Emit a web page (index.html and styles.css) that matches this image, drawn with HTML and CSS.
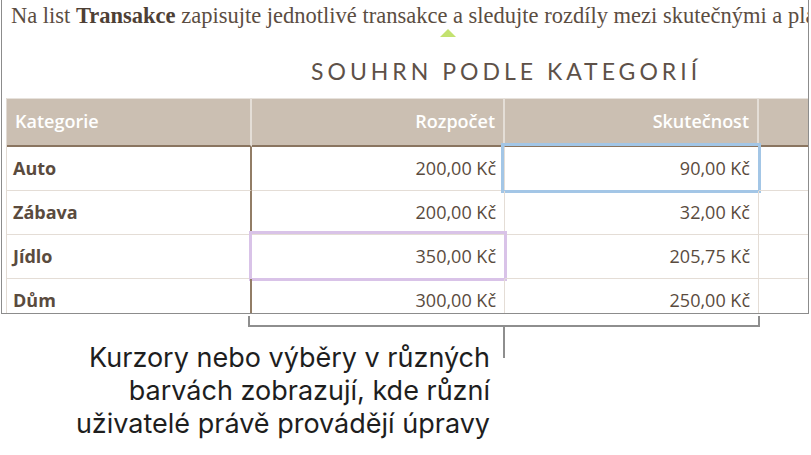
FILE: index.html
```html
<!DOCTYPE html>
<html lang="cs">
<head>
<meta charset="utf-8">
<link rel="stylesheet" href="styles.css">
</head>
<body>
<div class="frame">
  <p class="intro">Na list <b>Transakce</b> zapisujte jednotlivé transakce a sledujte rozdíly mezi skutečnými a plánovanými výdaji</p>
  <div class="cursor"></div>
  <h1 class="title">SOUHRN PODLE KATEGORIÍ</h1>
  <div class="table">
    <div class="hcell">Kategorie</div>
    <div class="hcell num">Rozpočet</div>
    <div class="hcell num">Skutečnost</div>
    <div class="hcell last"></div>

    <div class="cell cat">Auto</div>
    <div class="cell num">200,00 Kč</div>
    <div class="cell num">90,00 Kč<span class="sel blue"></span></div>
    <div class="cell last"></div>

    <div class="cell cat">Zábava</div>
    <div class="cell num">200,00 Kč</div>
    <div class="cell num">32,00 Kč</div>
    <div class="cell last"></div>

    <div class="cell cat">Jídlo</div>
    <div class="cell num">350,00 Kč<span class="sel purple"></span></div>
    <div class="cell num">205,75 Kč</div>
    <div class="cell last"></div>

    <div class="cell cat">Dům</div>
    <div class="cell num">300,00 Kč</div>
    <div class="cell num">250,00 Kč</div>
    <div class="cell last"></div>
  </div>
</div>
<div class="bracket"></div>
<div class="callout">
  <p class="caption">Kurzory nebo výběry v různých<br>barvách zobrazují, kde různí<br>uživatelé právě provádějí úpravy</p>
  <div class="stem"></div>
</div>
</body>
</html>
```

FILE: styles.css
```css
html, body {
  margin: 0;
  padding: 0;
  background: #ffffff;
}
body {
  width: 811px;
  height: 455px;
  overflow: hidden;
}
.frame {
  margin-left: 1px;
  width: 808px;
  height: 314px;
  box-sizing: border-box;
  border-left: 1px solid #8c8c8c;
  border-right: 1px solid #8c8c8c;
  border-bottom: 1px solid #8c8c8c;
  overflow: hidden;
  background: #fff;
}
.intro {
  margin: 0;
  padding: 4px 0 0 9px;
  line-height: 24px;
  font-family: "Liberation Serif", "DejaVu Serif", serif;
  font-size: 22.5px;
  letter-spacing: 0;
  color: #5b4d42;
  white-space: nowrap;
}
.intro b {
  font-weight: bold;
  color: #4e4035;
}
.cursor {
  width: 0;
  height: 0;
  margin: 1px 0 0 438px;
  border-left: 8px solid transparent;
  border-right: 8px solid transparent;
  border-bottom: 8px solid #c3e270;
}
.title {
  margin: 21px 0 0 0;
  padding-left: 309px;
  height: 26px;
  line-height: 26px;
  text-align: left;
  font-family: Lato, "Open Sans", sans-serif;
  font-weight: 400;
  font-size: 23px;
  letter-spacing: 4px;
  color: #5e5148;
  white-space: nowrap;
}
.table {
  margin: 14px 0 0 4px;
  display: grid;
  grid-template-columns: 245px 253px 254px 60px;
  font-family: "Open Sans", Lato, sans-serif;
  font-size: 18px;
  color: #5a4b3e;
  border-left: 1px solid #e2dbd4;
}
.hcell {
  box-sizing: border-box;
  height: 49px;
  background: #cbbfb2;
  border-top: 1px solid #e7e2dc;
  border-bottom: 2px solid #8a7560;
  border-right: 2px solid #e4ded7;
  color: #ffffff;
  font-weight: 600;
  line-height: 45px;
  padding: 0 8px;
  white-space: nowrap;
}
.hcell.num {
  text-align: right;
  padding-right: 8px;
}
.cell {
  position: relative;
  box-sizing: border-box;
  height: 44px;
  border-bottom: 1px solid #e4ddd6;
  border-right: 1px solid #e4ddd6;
  line-height: 43px;
  padding: 0 8px;
  white-space: nowrap;
}
.cell.cat {
  font-weight: 700;
  border-right: 2px solid #927d66;
  padding-left: 6px;
}
.cell.num {
  text-align: right;
  padding-right: 8px;
}
.sel {
  position: absolute;
  left: -4px;
  top: -4px;
  right: -3px;
  bottom: -3px;
  border: 3px solid;
  pointer-events: none;
}
.sel.blue {
  border-color: #a3c6e6;
}
.sel.purple {
  left: -3px;
  top: -4px;
  right: -3px;
  bottom: -3px;
  border-color: #d9c3e8;
}
.bracket {
  margin: 2px 0 0 248px;
  width: 512px;
  height: 11px;
  box-sizing: border-box;
  border: 2px solid #8e8e8e;
  border-top: none;
}
.callout {
  display: flex;
  align-items: flex-start;
}
.caption {
  margin: 0;
  padding-top: 14px;
  width: 490px;
  text-align: right;
  font-family: Inter, Roboto, sans-serif;
  font-size: 27px;
  line-height: 33px;
  color: #1e1e1e;
  white-space: nowrap;
}
.stem {
  margin-left: 13px;
  width: 2px;
  height: 31px;
  background: #8e8e8e;
}
```
